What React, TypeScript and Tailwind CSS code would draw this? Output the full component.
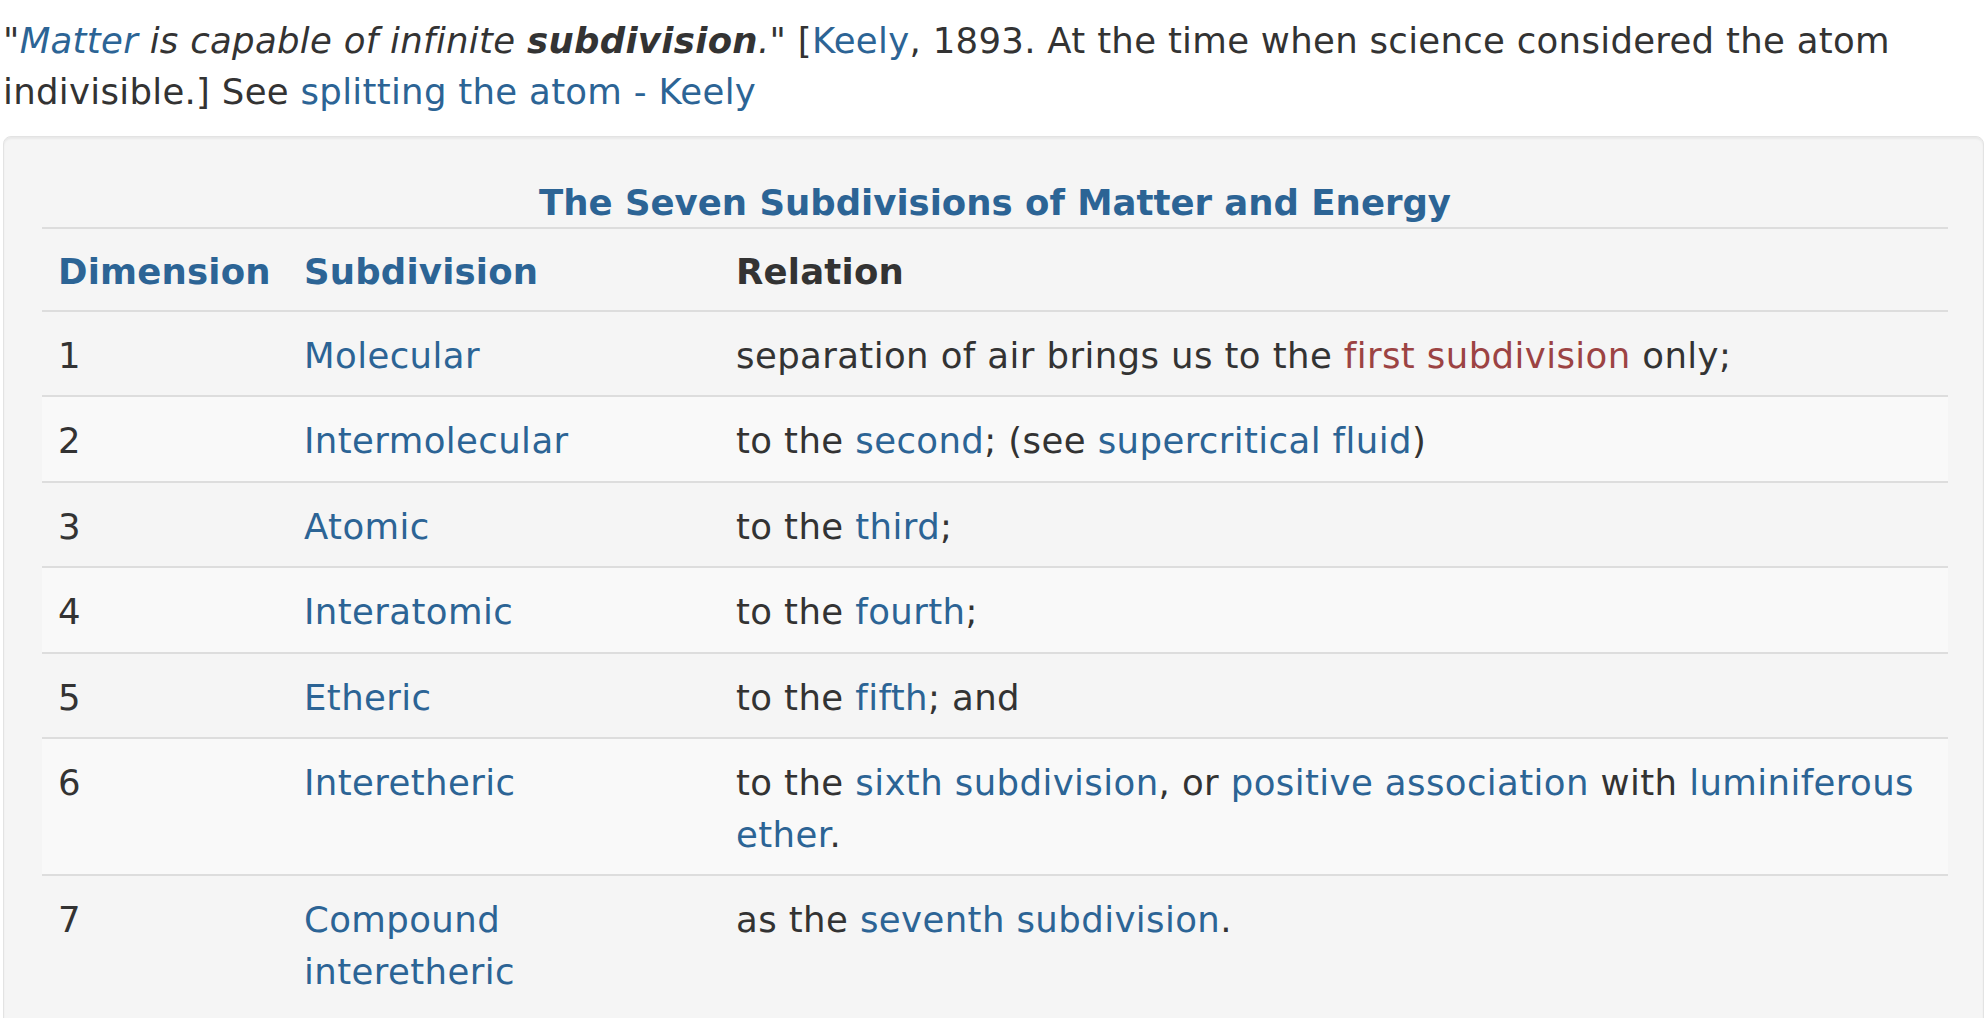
import React from "react";

type Part = string | { link: string; red?: boolean };

interface Row {
  dim: string;
  sub: string;
  relation: Part[];
}

const rows: Row[] = [
  {
    dim: "1",
    sub: "Molecular",
    relation: [
      "separation of air brings us to the ",
      { link: "first subdivision", red: true },
      " only;",
    ],
  },
  {
    dim: "2",
    sub: "Intermolecular",
    relation: [
      "to the ",
      { link: "second" },
      "; (see ",
      { link: "supercritical fluid" },
      ")",
    ],
  },
  { dim: "3", sub: "Atomic", relation: ["to the ", { link: "third" }, ";"] },
  { dim: "4", sub: "Interatomic", relation: ["to the ", { link: "fourth" }, ";"] },
  { dim: "5", sub: "Etheric", relation: ["to the ", { link: "fifth" }, "; and"] },
  {
    dim: "6",
    sub: "Interetheric",
    relation: [
      "to the ",
      { link: "sixth subdivision" },
      ", or ",
      { link: "positive association" },
      " with ",
      { link: "luminiferous ether" },
      ".",
    ],
  },
  {
    dim: "7",
    sub: "Compound interetheric",
    relation: ["as the ", { link: "seventh subdivision" }, "."],
  },
];

const linkCls = "text-[#2c6495] no-underline";
const cellCls =
  "border-t-2 border-[#dddddd] px-[16px] pt-[18px] pb-[14px] text-left align-top";
const headCls =
  "border-t-2 border-[#dddddd] px-[16px] pt-[17px] pb-[12px] text-left align-top font-bold tracking-[0.2px]";

export default function App() {
  return (
    <div className="min-h-screen bg-white px-[3px] pt-[15px] font-['DejaVu_Sans',Verdana,sans-serif] text-[35.5px] leading-[51px] tracking-[0.4px] text-[#333333]">
      <p className="tracking-[0.3px]">
        <em>
          "<a href="#" className={linkCls}>Matter</a> is capable of infinite{" "}
          <strong>subdivision</strong>."
        </em>{" "}
        [<a href="#" className={linkCls}>Keely</a>, 1893. At the time when
        science considered the atom indivisible.] See{" "}
        <a href="#" className={linkCls}>
          splitting the atom - Keely
        </a>
      </p>

      <div className="mt-[19px] rounded-[8px] border border-[#e3e3e3] bg-[#f5f5f5] pb-[40px] pl-[38px] pr-[35px] pt-[38px] shadow-[inset_0_2px_2px_rgba(0,0,0,0.05)]">
        <table className="w-full table-fixed border-collapse leading-[51.5px]">
          <caption className="pt-[3px] text-center font-bold leading-[49px] tracking-normal text-[#2c6495]">
            The Seven Subdivisions of Matter and Energy
          </caption>
          <colgroup>
            <col className="w-[246px]" />
            <col className="w-[432px]" />
            <col />
          </colgroup>
          <thead>
            <tr>
              <th className={`${headCls} text-[#2c6495]`}>Dimension</th>
              <th className={`${headCls} text-[#2c6495]`}>Subdivision</th>
              <th className={`${headCls} text-[#333333]`}>Relation</th>
            </tr>
          </thead>
          <tbody>
            {rows.map((row, i) => (
              <tr
                key={row.dim}
                className={i % 2 === 1 ? "bg-[#f9f9f9]" : "bg-[#f5f5f5]"}
              >
                <td className={cellCls}>{row.dim}</td>
                <td className={cellCls}>
                  <a href="#" className={linkCls}>
                    {row.sub}
                  </a>
                </td>
                <td className={cellCls}>
                  {row.relation.map((p, j) =>
                    typeof p === "string" ? (
                      <span key={j}>{p}</span>
                    ) : (
                      <a
                        key={j}
                        href="#"
                        className={
                          p.red
                            ? "text-[#9c4343] no-underline"
                            : linkCls
                        }
                      >
                        {p.link}
                      </a>
                    )
                  )}
                </td>
              </tr>
            ))}
          </tbody>
        </table>
      </div>
    </div>
  );
}
